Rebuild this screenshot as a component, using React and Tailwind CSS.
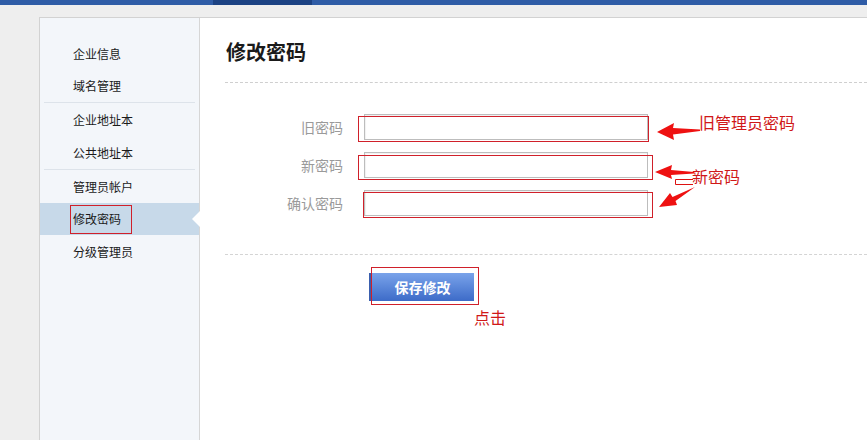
import React from "react";

const font = { fontFamily: '"Noto Sans CJK SC", "Liberation Sans", sans-serif' };

function NavItem({ label, active, boxed, h = "h-[33px]" }) {
  return (
    <div className={`relative flex items-center ${h} ${active ? "bg-[#c7d9e9]" : ""} ${boxed ? "pl-[30px]" : "pl-[33px]"}`}>
      {boxed ? (
        <span className="flex items-center h-[29px] w-[62px] pl-[2px] border border-[#d0202a] text-[12px] text-[#1a1a1a]">{label}</span>
      ) : (
        <span className="text-[12px] text-[#1a1a1a]">{label}</span>
      )}
      {active && (
        <span className="absolute right-[-1px] top-1/2 -translate-y-1/2 w-0 h-0 border-y-[8px] border-y-transparent border-r-[8px] border-r-white" />
      )}
    </div>
  );
}

function Sep() {
  return <div className="mx-[4px] border-t border-[#dde3ea]" />;
}

function Row({ label, box }) {
  return (
    <div className="flex items-center h-[26px]">
      <div className="w-[118px] text-right text-[14px] text-[#9a9a9a] leading-none">{label}</div>
      <div className="relative ml-[21px] w-[284px] h-[26px] border border-[#bdbdbd] bg-white shadow-[inset_1px_1px_1px_rgba(0,0,0,0.06)]">
        <div className={`absolute border border-[#d0202a] ${box}`} />
      </div>
    </div>
  );
}

export default function App() {
  return (
    <div className="relative w-[867px] h-[440px] overflow-hidden bg-[#eeeeee]" style={font}>
      {/* top bar */}
      <div className="flex h-[5px]">
        <div className="w-[213px] bg-[#2f5ca6]" />
        <div className="w-[99px] bg-[#1c4283]" />
        <div className="flex-1 bg-[#2f5ca6]" />
      </div>

      <div className="pt-[12px] pl-[39px] h-[435px]">
        <div className="flex h-full border-t border-l border-[#d2d2d2]">
          {/* sidebar */}
          <div className="w-[160px] bg-[#f3f6fa] border-r border-[#d6d6d6] pt-[20px]">
            <NavItem label="企业信息" h="h-[32px]" />
            <NavItem label="域名管理" h="h-[32px]" />
            <Sep />
            <NavItem label="企业地址本" />
            <NavItem label="公共地址本" />
            <Sep />
            <NavItem label="管理员帐户" />
            <NavItem label="修改密码" active boxed h="h-[32px]" />
            <NavItem label="分级管理员" />
          </div>

          {/* main */}
          <div className="flex-1 bg-white pl-[25px]">
            <div className="h-[65px] pt-[4px] flex items-center border-b border-dashed border-[#cfcfcf]">
              <h1 className="text-[20px] font-bold text-[#1a1a1a] pl-[1px]">修改密码</h1>
            </div>

            <div className="pt-[31px] pb-[38px] flex flex-col gap-[12px] border-b border-dashed border-[#d4d4d4]">
              <Row label="旧密码" box="left-[-7px] top-[1px] w-[291px] h-[26px]" />
              <Row label="新密码" box="left-[-7px] top-[2px] w-[295px] h-[25px]" />
              <Row label="确认密码" box="left-[-2px] top-[1px] w-[290px] h-[26px]" />
            </div>

            <div className="pt-[18px] pl-[144px]">
              <div className="relative w-[105px] h-[28px]">
                <button className="w-full h-full flex items-center justify-center bg-gradient-to-b from-[#7aa3ea] to-[#3d6bc8] border-l-2 border-[#3a5fae] text-white text-[14px] font-bold">
                  保存修改
                </button>
                <div className="absolute left-[2px] top-[-6px] w-[108px] h-[38px] border border-[#d0202a]" />
              </div>
            </div>
          </div>
        </div>
      </div>

      {/* annotations */}
      <svg className="absolute left-0 top-0 pointer-events-none" width="867" height="440" viewBox="0 0 867 440">
        <polygon points="657,132 674,123 673,128 700,129.5 700,131 673,134.5 674,140" fill="#ee1111" />
        <polygon points="655,172 672,165 671,170 694,172 694,173.5 671,175 672,179" fill="#ee1111" />
        <path d="M693,179.5 H675.5 V184.5 H693" fill="none" stroke="#dd1111" strokeWidth="1" />
        <polygon points="659,207 670,193 672.5,197 695,187 675.5,201 677,205" fill="#ee1111" />
      </svg>
      <span className="absolute left-[699px] top-[113px] text-[16px] leading-[18px] text-[#d01818]">旧管理员密码</span>
      <span className="absolute left-[692px] top-[167px] text-[16px] leading-[18px] text-[#d01818]">新密码</span>
      <span className="absolute left-[474px] top-[308px] text-[16px] leading-[18px] text-[#d01818]">点击</span>
    </div>
  );
}
